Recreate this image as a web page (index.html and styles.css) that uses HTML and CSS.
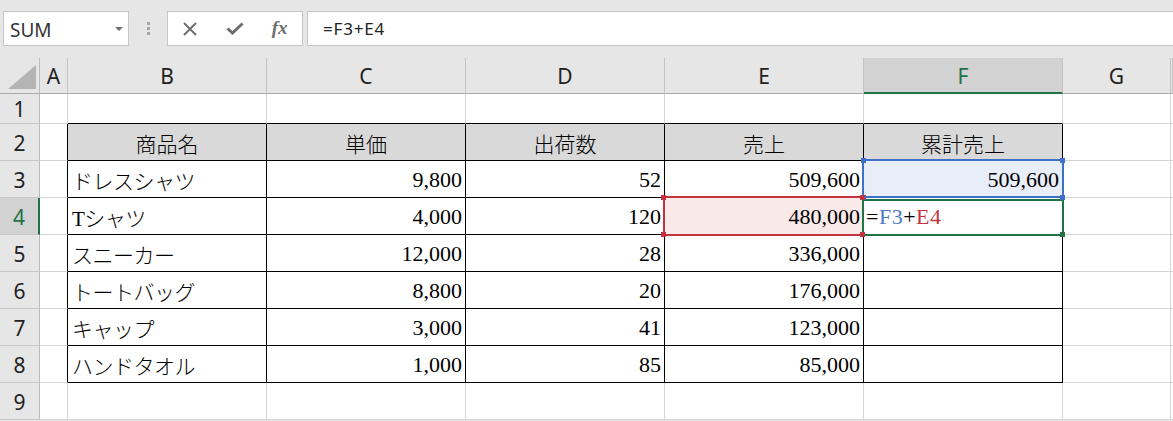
FILE: index.html
```html
<!DOCTYPE html>
<html lang="ja">

<head>
    <meta charset="UTF-8">
    <title>累計売上</title>
    <link rel="stylesheet" href="styles.css">
</head>

<body>
    <!-- Formula bar -->
    <div class="topbar">
        <div class="namebox">
            <span>SUM</span>
            <span class="drop"></span>
        </div>
        <div class="grip"><i></i><i></i><i></i></div>
        <div class="fbtns">
            <span class="fbtn">
                <svg width="14" height="14" viewBox="0 0 14 14"><path d="M1 1L13 13M13 1L1 13" stroke="#6e6e6e" stroke-width="2" fill="none"/></svg>
            </span>
            <span class="fbtn">
                <svg width="18" height="13" viewBox="0 0 18 13"><path d="M1.5 6.5L6.5 11L16.5 1.5" stroke="#6e6e6e" stroke-width="3" fill="none"/></svg>
            </span>
            <span class="fbtn fx">fx</span>
        </div>
        <div class="formula">=F3+E4</div>
    </div>

    <!-- Sheet -->
    <div class="sheet">
        <div class="row head">
            <div class="corner"><span class="tri"></span></div>
            <div class="ch">A</div>
            <div class="ch">B</div>
            <div class="ch">C</div>
            <div class="ch">D</div>
            <div class="ch">E</div>
            <div class="ch active">F</div>
            <div class="ch">G</div>
            <div class="ch"></div>
        </div>

        <div class="row first">
            <div class="rh">1</div>
            <div class="c"></div>
            <div class="c tb"></div>
            <div class="c tb"></div>
            <div class="c tb"></div>
            <div class="c tb"></div>
            <div class="c tb"></div>
            <div class="c"></div>
            <div class="c"></div>
        </div>

        <div class="row">
            <div class="rh">2</div>
            <div class="c lb"></div>
            <div class="c t th">商品名</div>
            <div class="c t th">単価</div>
            <div class="c t th">出荷数</div>
            <div class="c t th">売上</div>
            <div class="c t th">累計売上</div>
            <div class="c"></div>
            <div class="c"></div>
        </div>

        <div class="row">
            <div class="rh">3</div>
            <div class="c lb"></div>
            <div class="c t txt">ドレスシャツ</div>
            <div class="c t num">9,800</div>
            <div class="c t num">52</div>
            <div class="c t num">509,600</div>
            <div class="c t num ref-blue">509,600</div>
            <div class="c"></div>
            <div class="c"></div>
        </div>

        <div class="row">
            <div class="rh active">4</div>
            <div class="c lb"></div>
            <div class="c t txt">Tシャツ</div>
            <div class="c t num">4,000</div>
            <div class="c t num">120</div>
            <div class="c t num ref-red">480,000</div>
            <div class="c t edit">=<span class="blue">F3</span>+<span class="red">E4</span></div>
            <div class="c"></div>
            <div class="c"></div>
        </div>

        <div class="row">
            <div class="rh">5</div>
            <div class="c lb"></div>
            <div class="c t txt">スニーカー</div>
            <div class="c t num">12,000</div>
            <div class="c t num">28</div>
            <div class="c t num">336,000</div>
            <div class="c t"></div>
            <div class="c"></div>
            <div class="c"></div>
        </div>

        <div class="row">
            <div class="rh">6</div>
            <div class="c lb"></div>
            <div class="c t txt">トートバッグ</div>
            <div class="c t num">8,800</div>
            <div class="c t num">20</div>
            <div class="c t num">176,000</div>
            <div class="c t"></div>
            <div class="c"></div>
            <div class="c"></div>
        </div>

        <div class="row">
            <div class="rh">7</div>
            <div class="c lb"></div>
            <div class="c t txt">キャップ</div>
            <div class="c t num">3,000</div>
            <div class="c t num">41</div>
            <div class="c t num">123,000</div>
            <div class="c t"></div>
            <div class="c"></div>
            <div class="c"></div>
        </div>

        <div class="row">
            <div class="rh">8</div>
            <div class="c lb"></div>
            <div class="c t txt">ハンドタオル</div>
            <div class="c t num">1,000</div>
            <div class="c t num">85</div>
            <div class="c t num">85,000</div>
            <div class="c t"></div>
            <div class="c"></div>
            <div class="c"></div>
        </div>

        <div class="row">
            <div class="rh">9</div>
            <div class="c"></div>
            <div class="c"></div>
            <div class="c"></div>
            <div class="c"></div>
            <div class="c"></div>
            <div class="c"></div>
            <div class="c"></div>
            <div class="c"></div>
        </div>

        <!-- reference and selection frames -->
        <div class="frame frame-red"></div>
        <div class="frame frame-blue"></div>
        <div class="frame frame-green"></div>

        <span class="knob blue-k k-f3-tl"></span>
        <span class="knob blue-k k-f3-tr"></span>
        <span class="knob blue-k k-f3-bl"></span>
        <span class="knob blue-k k-f3-br"></span>
        <span class="knob red-k k-e4-tl"></span>
        <span class="knob red-k k-e4-tr"></span>
        <span class="knob red-k k-e4-bl"></span>
        <span class="knob red-k k-e4-br"></span>
        <span class="knob green-k k-f4-br"></span>
    </div>
</body>

</html>
```

FILE: styles.css
```css
body {
    margin: 0;
    background-color: #e6e6e6;
    font-family: "Noto Sans", "Open Sans", sans-serif;
    color: #222;
    overflow: hidden;
}

/* formula bar */

.topbar {
    display: flex;
    align-items: flex-start;
    height: 58px;
    padding: 11px 0 0 3px;
    box-sizing: border-box;
}

.namebox {
    width: 126px;
    height: 35px;
    box-sizing: border-box;
    border: 1px solid #c6c6c6;
    background-color: #fff;
    display: flex;
    align-items: center;
    justify-content: space-between;
    padding: 3px 5px 0 6px;
    font-size: 19px;
    color: #333;
}

.drop {
    width: 0;
    height: 0;
    border-left: 4px solid transparent;
    border-right: 4px solid transparent;
    border-top: 4px solid #6e6e6e;
    margin-top: -3px;
}

.grip {
    display: flex;
    flex-direction: column;
    gap: 2px;
    margin: 11px 0 0 18px;
}

.grip i {
    width: 3px;
    height: 3px;
    background-color: #a6a6a6;
}

.fbtns {
    margin-left: 17px;
    width: 136px;
    height: 35px;
    box-sizing: border-box;
    border: 1px solid #c6c6c6;
    background-color: #fff;
    display: flex;
    align-items: center;
}

.fbtn {
    width: 45px;
    display: flex;
    justify-content: center;
    align-items: center;
}

.fbtn.fx {
    font-family: "Liberation Serif", serif;
    font-style: italic;
    font-weight: bold;
    font-size: 19px;
    color: #6e6e6e;
    margin-top: -2px;
}

.formula {
    margin-left: 4px;
    flex: 1;
    height: 35px;
    box-sizing: border-box;
    border: 1px solid #c6c6c6;
    border-right: none;
    background-color: #fff;
    padding: 5px 0 0 15px;
    font-size: 17px;
    letter-spacing: 0.8px;
    color: #222;
}

/* sheet grid */

.sheet {
    position: relative;
}

.row {
    display: grid;
    grid-template-columns: 40px 28px repeat(5, 199px) 108px 1fr;
    height: 37px;
}

.row.head {
    height: 36px;
}

.row.first {
    height: 30px;
}

.c,
.ch,
.rh,
.corner {
    box-sizing: border-box;
    display: flex;
    align-items: center;
    overflow: hidden;
    white-space: nowrap;
}

.c {
    background-color: #fff;
    border-right: 1px solid #d4d4d4;
    border-bottom: 1px solid #d4d4d4;
    font-family: "Liberation Serif", "Noto Sans CJK JP", serif;
    font-size: 22px;
    color: #000;
    padding: 2px 4px 0 4px;
}

.corner {
    background-color: #e6e6e6;
    border-right: 1px solid #bcbcbc;
    border-bottom: 1px solid #ababab;
    position: relative;
}

.tri {
    position: absolute;
    right: 3px;
    bottom: 4px;
    width: 0;
    height: 0;
    border-left: 28px solid transparent;
    border-bottom: 24px solid #b4b4b4;
}

.ch {
    background-color: #e6e6e6;
    border-right: 1px solid #c2c2c2;
    border-bottom: 1px solid #ababab;
    justify-content: center;
    font-size: 21px;
    color: #222;
    padding-top: 1px;
}

.ch.active {
    background-color: #d2d2d2;
    color: #217346;
    border-bottom: 2px solid #217346;
}

.rh {
    background-color: #e6e6e6;
    border-right: 1px solid #bcbcbc;
    border-bottom: 1px solid #c8c8c8;
    justify-content: center;
    font-size: 21px;
    color: #222;
    padding-top: 1px;
}

.rh.active {
    background-color: #d2d2d2;
    color: #217346;
    border-right: 2px solid #217346;
}

/* table borders */

.c.t {
    border-right-color: #000;
    border-bottom-color: #000;
}

.c.lb {
    border-right-color: #000;
}

.c.tb {
    border-bottom-color: #000;
}

.c.th {
    background-color: #d9d9d9;
    justify-content: center;
    font-size: 21px;
    font-weight: 300;
}

.c.txt {
    font-size: 21px;
    font-weight: 300;
    letter-spacing: -0.5px;
}

.c.num {
    justify-content: flex-end;
    padding-right: 3px;
}

.c.edit {
    padding-left: 2px;
    letter-spacing: 0.5px;
}

.ref-blue {
    background-color: #e8eef8 !important;
}

.ref-red {
    background-color: #f9e9e9 !important;
}

.blue {
    color: #4a78c8;
}

.red {
    color: #c4343e;
}

/* frames lie over the cells */

.frame {
    position: absolute;
    box-sizing: border-box;
    border: 2px solid;
    pointer-events: none;
}

.frame-red {
    left: 663px;
    top: 138px;
    width: 201px;
    height: 40px;
    border-color: #c4343e;
}

.frame-blue {
    left: 862px;
    top: 101px;
    width: 202px;
    height: 39px;
    border-color: #3e70c7;
}

.frame-green {
    left: 862px;
    top: 141px;
    width: 202px;
    height: 37px;
    border-color: #217346;
}

.knob {
    position: absolute;
    width: 5px;
    height: 5px;
    box-sizing: border-box;
}

.blue-k {
    background-color: #3e70c7;
}

.red-k {
    background-color: #c4343e;
}

.green-k {
    background-color: #217346;
}

.k-f3-tl { left: 861px; top: 100px; }
.k-f3-tr { left: 1060px; top: 100px; }
.k-f3-bl { left: 861px; top: 137px; }
.k-f3-br { left: 1060px; top: 137px; }
.k-e4-tl { left: 661px; top: 137px; }
.k-e4-tr { left: 860px; top: 137px; }
.k-e4-bl { left: 661px; top: 174px; }
.k-e4-br { left: 860px; top: 174px; }
.k-f4-br { left: 1060px; top: 174px; }
```
